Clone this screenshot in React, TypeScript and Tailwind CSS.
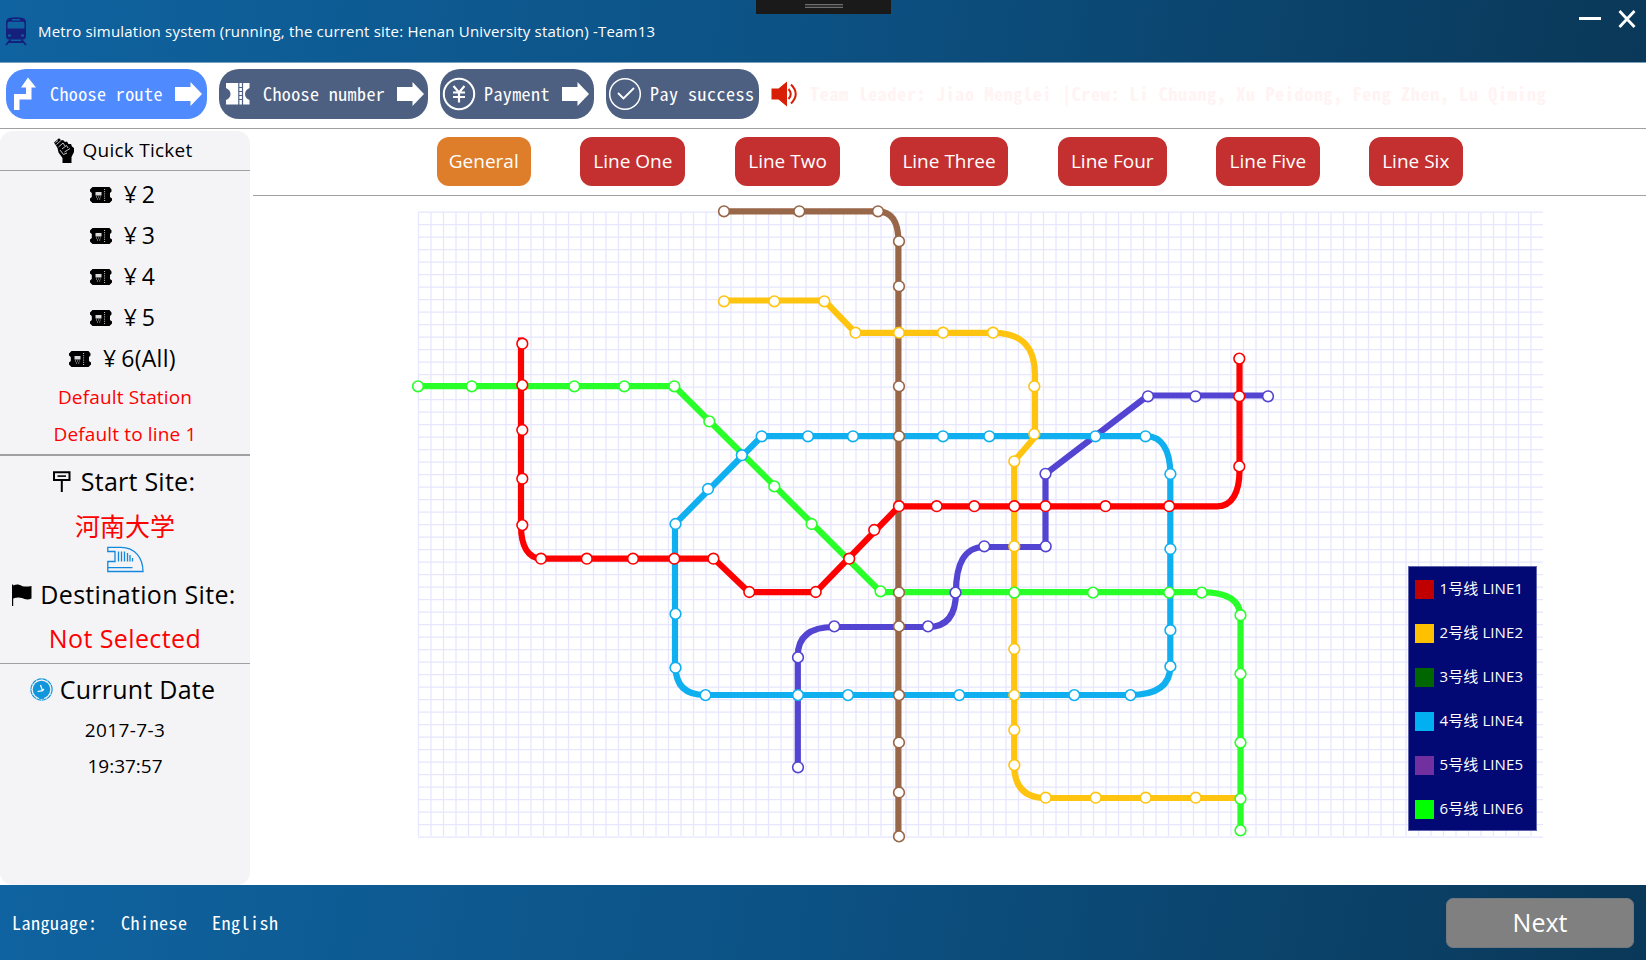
import React from "react";

type Pt = [number, number];

const MONO = "font-['Noto_Sans_Mono_CJK_SC','Liberation_Mono',monospace]";

const BROWN = "#986648";
const YELLOW = "#ffc40f";
const GREEN = "#29ff29";
const BLUE = "#10b0f0";
const PURPLE = "#5344d2";
const RED = "#ff0000";

const tracks: { color: string; d: string }[] = [
  { color: PURPLE, d: "M797.8 767V656C797.8 636 811 627 834 627H928C946 627 956 616 956 592C956 565 964 547 984 547H1045.5V474L1148 395.5H1268" },
  { color: GREEN, d: "M418 386.2H674.5L881 592.2H1201C1226 592.2 1240.5 600 1240.5 617V835" },
  { color: BLUE, d: "M675 666V524L761.7 436.2H1146C1161 436.2 1170.3 449 1170.3 474V666C1170.3 686 1156 695 1130 695H705C686 695 675.5 686 675.5 666" },
  { color: YELLOW, d: "M724 300.5H824.3L855.5 332.9H993C1021 332.9 1035 346 1035 375V437L1014.2 461V765C1014.2 787 1025 798 1046 798H1240" },
  { color: BROWN, d: "M724 211.3H878C891 211.3 898.4 221 898.4 241V836" },
  { color: RED, d: "M521 337.5V526C521 546 528 558.7 542 558.7H714L749 592.2H815.8L899 506.3H1217C1232 506.3 1239.5 492 1239.5 471V358" },
];

const stations: { color: string; at: Pt[] }[] = [
  { color: BROWN, at: [[724, 211.3], [799.3, 211.3], [878, 211.3], [899, 241.3], [899, 286.3], [899, 386.3], [899, 436.3], [899, 592.5], [899, 626.4], [899, 695.1], [899, 742.5], [899, 792.5], [899, 836.4]] },
  { color: YELLOW, at: [[724, 301.3], [774.3, 301.3], [824.3, 301.3], [855.5, 332.7], [899, 332.7], [943, 332.7], [993, 332.7], [1034.3, 386.3], [1034.3, 434], [1014.3, 461.3], [1014.3, 546.3], [1014.3, 649], [1014.3, 695.1], [1014.3, 730], [1014.3, 765.1], [1045.7, 797.7], [1095.7, 797.7], [1145.7, 797.7], [1195.7, 797.7]] },
  { color: GREEN, at: [[418, 386.3], [471.8, 386.3], [574.3, 386.3], [624.3, 386.3], [674.3, 386.3], [709.3, 421.4], [774.3, 486.4], [811.6, 524], [880.5, 591.3], [1014.3, 592.6], [1093, 592.6], [1169.2, 592.6], [1201.7, 592.6], [1240.5, 615.2], [1240.5, 673.9], [1240.5, 742.6], [1240.5, 798.9], [1240.5, 830.4]] },
  { color: BLUE, at: [[761.7, 436.3], [808, 436.3], [853, 436.3], [943, 436.3], [989.3, 436.3], [1095.4, 436.3], [1145.5, 436.3], [1170.4, 474], [1170.4, 549], [1170.4, 630.2], [1170.4, 666.4], [1130.5, 695.1], [1074.3, 695.1], [959.3, 695.1], [848, 695.1], [798, 695.1], [705.5, 695.1], [675.5, 667.7], [675.5, 613.9], [675.5, 524], [708, 489], [741.8, 455.2]] },
  { color: PURPLE, at: [[798, 767.3], [798, 657.4], [834.3, 626.4], [928, 626.4], [955.5, 592.6], [984.3, 546.3], [1045.7, 546.3], [1045.5, 473.8], [1148, 396.3], [1195.5, 396.3], [1268, 396.3]] },
  { color: RED, at: [[522.3, 343.7], [522.3, 385.1], [522.3, 430], [522.3, 478.7], [522.3, 525.1], [541, 558.7], [586.8, 558.7], [633, 558.7], [674.3, 558.7], [713.4, 558.7], [749.3, 592], [815.7, 592], [849.2, 558.7], [874.2, 530], [899, 506.2], [936.7, 506.2], [974.3, 506.2], [1014.3, 506.2], [1045.5, 506.2], [1105.5, 506.2], [1169.2, 506.2], [1239.3, 466.4], [1239.3, 396.3], [1239.3, 358.6]] },
];

const gridPath = [
  ...Array.from({ length: 90 }, (_, i) => `M${418.5 + i * 12.5} 211.5V836`),
  ...Array.from({ length: 51 }, (_, i) => `M418 ${212 + i * 12.5}H1543`),
].join("");

const legend = [
  { n: 1, cls: "bg-[#c00000]" },
  { n: 2, cls: "bg-[#ffc000]" },
  { n: 3, cls: "bg-[#006600]" },
  { n: 4, cls: "bg-[#00b0f0]" },
  { n: 5, cls: "bg-[#7030a0]" },
  { n: 6, cls: "bg-[#00ff00]" },
];

const tabs = [
  { label: "General", cls: "w-[94.5px] bg-[#de7e2b]" },
  { label: "Line One", cls: "w-[105px] bg-[#c42f30]" },
  { label: "Line Two", cls: "w-[105.5px] bg-[#c42f30]" },
  { label: "Line Three", cls: "w-[118.7px] bg-[#c42f30]" },
  { label: "Line Four", cls: "w-[109px] bg-[#c42f30]" },
  { label: "Line Five", cls: "w-[103.5px] bg-[#c42f30]" },
  { label: "Line Six", cls: "w-[93.5px] bg-[#c42f30]" },
];

function TrainIcon() {
  return (
    <svg width="22" height="29" viewBox="0 0 22 29" className="shrink-0">
      <path fill="#14207c" fillRule="evenodd" d="M4 1Q11-.6 18 1Q21 2 21 6V19Q21 22 18 22.600H4Q1 22 1 19V6Q1 2 4 1ZM7 2V3.500H15V2ZM3.500 4.800Q2.500 5.500 2.500 7V11.500H19.500V7Q19.500 5.500 18.500 4.800ZM3 17.500V19.500H6V17.500ZM16 17.500V19.500H19V17.500Z" />
      <path stroke="#14207c" strokeWidth="1.800" fill="none" d="M5.500 22.500L1 28M16.500 22.500L21 28M4 25H18" />
    </svg>
  );
}

function ArrowRight() {
  return (
    <svg width="28" height="24" viewBox="0 0 28 24" className="shrink-0" fill="#fff">
      <path d="M0 5H15.500V0L27 12L15.500 24V19H0Z" />
    </svg>
  );
}

function FistIcon() {
  return (
    <svg width="20" height="25" viewBox="0 0 20 25">
      <path d="M0 4.500L5 .300L7.500 2.500L9 2L11 4L13 3.500L14.500 6L17 6L18 8.500L20 10L20 14L17.500 19V25H8.500V20L4.500 14.500L3.500 10L2 7.500Z" />
      <g stroke="#f4f4f7" strokeWidth=".8" fill="none">
        <path d="M2.500 6.500L7 2.500M4.500 9L9 5L11 8M8 11L12.500 7.500L14 10M10.500 14L16 10.500M6 12L9.500 16.500L13 15M1.500 4.500L4 2.500" />
      </g>
    </svg>
  );
}

function TicketIcon() {
  return (
    <svg width="22" height="16" viewBox="0 0 22 16" className="shrink-0">
      <path d="M2.500 0H19.500L21.500 2.500V4.500L20 6V10L22 11.500V13.500L19.500 16H2.500L0 13.500V11.500L1.800 10V6L0 4.500V2.500Z" />
      <path fill="#d9d9dc" d="M5.500 5H11.500V8.500H5.500Z" />
      <path stroke="#e8e8ea" strokeWidth=".9" strokeDasharray="1 1.200" fill="none" d="M14.600 2V15M6 10H11M7 12H10.500" />
    </svg>
  );
}

function SignIcon() {
  return (
    <svg width="18" height="22" viewBox="0 0 18 22">
      <path d="M1 1.200H16.500V9H1ZM8.800 9V21" fill="none" stroke="#000" strokeWidth="2" />
      <path d="M4.500 5.100H13" stroke="#000" strokeWidth="1.600" />
    </svg>
  );
}

function BulletTrain() {
  return (
    <svg width="37" height="27" viewBox="0 0 37 27" fill="none" stroke="#1387dc" strokeWidth="1.300">
      <path d="M.8 5.500V1.300H14C28 1.300 36 12 36 25.500H.8V15.500H8V5.500Z" />
      <path d="M1 21.600H25.500M11.500 5.500V15.500M14.500 5.500V15.500M17.500 5.500V15.500M20.500 7V15.500M23 9V15.500M25.500 12V15.500" />
    </svg>
  );
}

function FlagIcon() {
  return (
    <svg width="20" height="22" viewBox="0 0 20 22">
      <path d="M0 .500H1.200V1.500C5 0 7 .500 10 2C13 3 16 2.500 19.500 2V14.500C16 16 13 15.500 10 14C7 13 4 13.500 1.200 14.500V22H0Z" />
    </svg>
  );
}

function ClockIcon() {
  return (
    <svg width="23" height="23" viewBox="0 0 23 23">
      <circle cx="11.500" cy="11.500" r="10.600" fill="none" stroke="#1296db" strokeWidth="1.200" strokeDasharray="5 .6" />
      <circle cx="11.500" cy="11.500" r="8.700" fill="#1296db" />
      <path d="M8.500 21L11.500 18L14.500 21Z" fill="#1296db" />
      <path d="M10.500 7L12.500 12.700L7.500 13.500M12.500 12.700L14 11" fill="none" stroke="#fff" strokeWidth="1.200" />
    </svg>
  );
}

function TopBar() {
  return (
    <header className="relative flex h-[63px] items-center border-b border-[#7ca0bc] bg-[linear-gradient(100deg,#0f63a0_0%,#0c5183_50%,#0a3858_100%)] pl-[5px] text-white">
      <TrainIcon />
      <h1 className="ml-[11px] text-[15px] tracking-[0.2px] whitespace-nowrap">
        Metro simulation system (running, the current site: Henan University station) -Team13
      </h1>
      <div className="absolute top-0 left-[756px] flex h-[14px] w-[135px] justify-center bg-[#1a1a1a] pt-1">
        <div className="h-1 w-[38px] border-y border-[#6e6e6e] bg-[#303030]" />
      </div>
      <svg width="58" height="22" viewBox="0 0 58 22" className="absolute top-[8px] left-[1578px]" stroke="#fff">
        <path d="M1 10.500H23" strokeWidth="3" />
        <path d="M41.500 3L56.500 19M56.500 3L41.500 19" strokeWidth="2.800" />
      </svg>
    </header>
  );
}

function Steps() {
  const pill = "flex h-[50px] items-center rounded-[20px] whitespace-nowrap";
  return (
    <div className={`flex h-[66px] items-start border-b border-[#a0a0a0] pt-[6px] pl-[6px] text-[18px] leading-[24px] font-medium tracking-[0.4px] text-white ${MONO}`}>
      <div className={`${pill} w-[201px] bg-[#4f8aff]`}>
        <svg width="24" height="34" viewBox="0 0 24 34" className="ml-[7px] shrink-0" fill="#fff">
          <path d="M15 0.500L23 10.500H18.500V22.500H6.500V33H1V17H13V10.500H8Z" />
        </svg>
        <span className="mb-[2px] ml-[13px] w-[125px]">Choose route</span>
        <ArrowRight />
      </div>
      <div className={`${pill} ml-[12px] w-[209px] bg-[#4e6081]`}>
        <svg width="24" height="22" viewBox="0 0 24 22" className="ml-[7px] shrink-0">
          <path fill="#fff" d="M0 0H23.500V5Q19 7 19 11Q19 15 23.500 17V21.500H0V17Q4.500 15 4.500 11Q4.500 7 0 5Z" />
          <path stroke="#4e6081" strokeWidth="1.200" d="M12.800 0V22M16.500 0V22M13 4.500H16.500M13 8.500H16.500M13 12.500H16.500M13 16.500H16.500" />
        </svg>
        <span className="mb-[2px] ml-[13px] w-[134px]">Choose number</span>
        <ArrowRight />
      </div>
      <div className={`${pill} ml-[12px] w-[154px] bg-[#4e6081]`}>
        <svg width="34" height="34" viewBox="0 0 34 34" className="ml-[2px] shrink-0" fill="none" stroke="#fff" strokeWidth="2.200">
          <circle cx="17" cy="17" r="15.200" strokeWidth="2" />
          <path d="M11.500 9L17 15.500L22.500 9M11 15.500H23M11 20H23M17 15.500V25.500" />
        </svg>
        <span className="mb-[2px] ml-[8px] w-[78px]">Payment</span>
        <ArrowRight />
      </div>
      <div className={`${pill} ml-[12px] w-[153px] bg-[#4e6081]`}>
        <svg width="34" height="34" viewBox="0 0 34 34" className="ml-[2px] shrink-0" fill="none" stroke="#fff">
          <circle cx="17" cy="17" r="15.300" strokeWidth="1.500" />
          <path d="M10 16L15.500 21.500L26 11" strokeWidth="1.800" />
        </svg>
        <span className="mb-[2px] ml-[8px] tracking-[0.5px]">Pay success</span>
      </div>
      <svg width="27" height="26" viewBox="0 0 27 26" className="mt-[12px] ml-[12px] shrink-0">
        <path fill="#d81e06" d="M.5 7.500H7.500L16 .500V25.500L7.500 18.500H.5Z" />
        <path fill="none" stroke="#d81e06" strokeWidth="2" d="M17.500 8Q22 13 17.500 18M20 3.500Q29.500 13 20 22.500" />
      </svg>
      <span className="mt-[12px] ml-[12px] font-bold tracking-[0.69px] whitespace-nowrap text-[#fff3f3]">
        Team leader: Jiao Menglei |Crew: Li Chuang, Xu Peidong, Feng Zhen, Lu Qiming
      </span>
    </div>
  );
}

function Sidebar() {
  const row = "flex items-center justify-center whitespace-nowrap";
  return (
    <aside className="mt-[2px] flex w-[250px] shrink-0 flex-col rounded-[13px] bg-[#f4f4f7] text-[19px] text-black">
      <div className={`${row} h-[39px] gap-[8px] pr-[3px] tracking-[0.25px]`}>
        <FistIcon />
        Quick Ticket
      </div>
      <div className="h-px bg-[#a0a0a0]" />
      <div className="mt-[3px] text-[23px]">
        {["2", "3", "4", "5", "6(All)"].map((v) => (
          <div key={v} className={`${row} h-[41px] pr-[5px]`}>
            <TicketIcon />
            <span className="ml-[12px]">¥</span>
            <span className="ml-[5px] tracking-[0.3px]">{v}</span>
          </div>
        ))}
      </div>
      <div className={`${row} h-[37px] tracking-[0.15px] text-[#ff0000]`}>Default Station</div>
      <div className={`${row} h-[37px] tracking-[0.15px] text-[#ff0000]`}>Default to line 1</div>
      <div className="mt-[1px] h-[2px] bg-[#a0a0a0]" />
      <div className={`${row} h-[51px] gap-[10px] pr-[2px] text-[25px] tracking-[0.25px]`}>
        <SignIcon />
        Start Site:
      </div>
      <div className={`${row} h-[39px] text-[25px] text-[#ff0000]`}>河南大学</div>
      <div className={`${row} h-[27px]`}>
        <BulletTrain />
      </div>
      <div className={`${row} h-[43px] gap-[8px] pr-[2px] text-[25px] tracking-[0.3px]`}>
        <FlagIcon />
        Destination Site:
      </div>
      <div className={`${row} h-[46px] text-[25px] tracking-[0.4px] text-[#ff0000]`}>Not Selected</div>
      <div className="mt-px h-px bg-[#a0a0a0]" />
      <div className={`${row} h-[51px] gap-[7px] pr-[5px] text-[25px] tracking-[0.25px]`}>
        <ClockIcon />
        Currunt Date
      </div>
      <div className={`${row} h-[30px] tracking-[0.4px]`}>2017-7-3</div>
      <div className={`${row} h-[42px]`}>19:37:57</div>
    </aside>
  );
}

function MetroMap() {
  return (
    <div className="relative flex-1">
      <svg width="1393" height="689" viewBox="253 196 1393 689" className="block" fill="none">
        <path d={gridPath} stroke="#e6e6ff" strokeWidth="1.25" />
        {tracks.map((t) => (
          <path key={t.color} d={t.d} stroke={t.color} strokeWidth="6.200" strokeLinejoin="round" />
        ))}
        {stations.map((s) =>
          s.at.map(([x, y]) => (
            <circle key={`${x}-${y}`} cx={x} cy={y} r="5.350" fill="#fff" stroke={s.color} strokeWidth="1.600" />
          )),
        )}
      </svg>
      <div className="absolute top-[370px] left-[1155px] h-[265px] w-[129px] border border-[#6065ac] bg-[#020874]">
        {legend.map((l) => (
          <div key={l.n} className="flex h-[44px] items-center pl-[6px] text-[15px] whitespace-nowrap text-white">
            <span className={`h-[19px] w-[18.500px] ${l.cls}`} />
            <span className="mb-[1px] ml-[6px] tracking-[0.1px]">{l.n}号线 LINE{l.n}</span>
          </div>
        ))}
      </div>
    </div>
  );
}

export default function App() {
  return (
    <div className="flex h-[960px] w-[1646px] flex-col overflow-hidden bg-white font-['Open_Sans','Noto_Sans_CJK_SC',sans-serif]">
      <TopBar />
      <Steps />
      <div className="flex min-h-0 flex-1">
        <Sidebar />
        <main className="ml-[3px] flex flex-1 flex-col">
          <nav className="flex h-[67px] shrink-0 gap-[49.4px] border-b border-[#a0a0a0] pt-[8px] pl-[183.500px]">
            {tabs.map((t) => (
              <div key={t.label} className={`flex h-[49px] items-center justify-center rounded-[12px] text-[19px] whitespace-nowrap text-white ${t.cls}`}>
                {t.label}
              </div>
            ))}
          </nav>
          <MetroMap />
        </main>
      </div>
      <footer className="flex h-[75px] shrink-0 items-center bg-[linear-gradient(100deg,#0f63a0_0%,#0c5183_50%,#0a3858_100%)] pr-[12px] pl-[12px] text-white">
        <div className={`mb-[2px] flex text-[18px] leading-[24px] font-medium tracking-[0.5px] ${MONO}`}>
          <span className="w-[109px]">Language:</span>
          <span className="w-[91px]">Chinese</span>
          <span>English</span>
        </div>
        <div className="ml-auto flex h-[50px] w-[188px] items-center justify-center rounded-[7px] border border-[#707880] bg-[#808080] text-[25px]">
          Next
        </div>
      </footer>
    </div>
  );
}
